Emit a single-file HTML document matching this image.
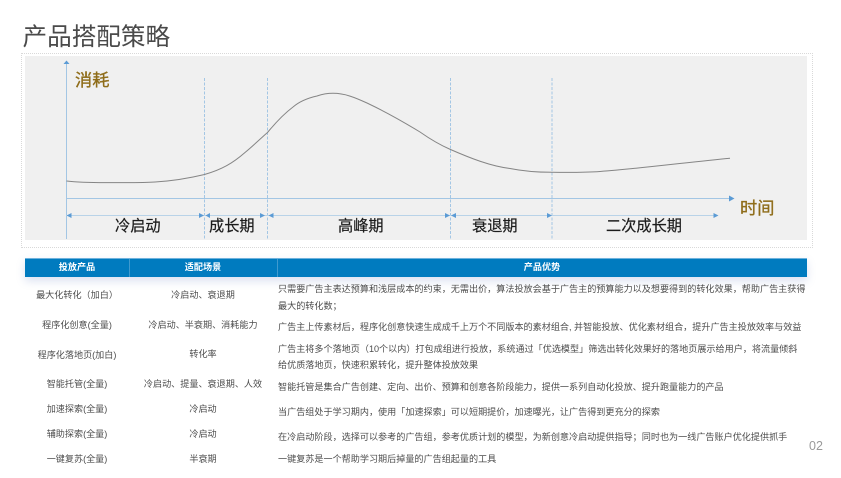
<!DOCTYPE html>
<html lang="zh">
<head>
<meta charset="utf-8">
<style>
html,body{margin:0;padding:0;background:#fff}
body{width:841px;height:478px;position:relative;overflow:hidden;font-family:"Liberation Sans","Noto Sans CJK SC",sans-serif}
#w{position:absolute;left:0;top:0;width:841px;height:478px;filter:blur(.35px)}
.t{position:absolute;white-space:nowrap;line-height:14px;height:14px;font-size:9.1px;color:#4c4c4c}
.c1{left:25px;width:104px;text-align:center}
.c2{left:129px;width:148px;text-align:center}
.c3{left:278px}
.h{position:absolute;top:258px;height:19px;line-height:19px;text-align:center;color:#fff;font-size:9.1px;font-weight:700}
.l{position:absolute;white-space:nowrap;top:218px;height:18px;line-height:18px;font-size:15.2px;color:#1c1c1c;-webkit-text-stroke:.2px #1c1c1c}
.g{position:absolute;white-space:nowrap;height:22px;line-height:22px;font-size:17.2px;color:#8f6d1a;-webkit-text-stroke:.35px #8f6d1a}
</style>
</head>
<body>
<div id="w">
<div style="position:absolute;left:22.5px;top:20px;font-size:24.6px;line-height:36px;color:#4a4a4a;white-space:nowrap">产品搭配策略</div>
<div style="position:absolute;left:21px;top:53px;width:790px;height:193px;border:1px dotted #d9d9d9"></div>
<div style="position:absolute;left:25px;top:56px;width:782px;height:183.5px;background:#f0f0f0"></div>

<svg width="841" height="478" style="position:absolute;left:0;top:0" fill="none">
  <g stroke="#a3c6e4" stroke-width="1">
    <path d="M66.5 63V239"/>
    <path d="M66 198.5H732"/>
    <path d="M204.5 78V239M267.5 78V239M450.5 78V239M552 78V239" stroke-dasharray="3 1.5"/>
  </g>
  <path d="M66 215.5H716" stroke="#b9d3e8" stroke-width="1"/>
  <path d="M66.5 181C78 182.3 90 182.6 105 182.6C120 182.6 140 183 155 182C172 181 190 178 204.5 174.5C222 169.5 233 163 245 152.5C253 146 260 139 267.5 132.5C277 121 285 113 293 107C300 101 308 98 317 96C323 94 328 93.3 333 93.3C345 93.3 355 97.5 367 103C385 111.5 402 121 420 132C430 139 440 145 450.5 149.5C470 158 490 166 510 168.5C525 171.5 540 172.3 552 172.3C570 172.5 585 172.6 600 171.5C640 168.5 690 162 730 158.2" stroke="#858585" stroke-width="1"/>
  <g fill="#5b9bd5">
    <path d="M66.5 60.5L69.5 64H63.5Z"/>
    <path d="M734.5 198.5L729 195.5V201.5Z"/>
    <path d="M66.5 215.5L71.5 213V218Z"/>
    <path d="M204 215.5L199 213V218Z"/>
    <path d="M205.5 215.5L210 213V218Z"/>
    <path d="M265 215.5L260 213V218Z"/>
    <path d="M268.5 215.5L273.5 213V218Z"/>
    <path d="M450 215.5L445 213V218Z"/>
    <path d="M451 215.5L456 213V218Z"/>
    <path d="M552 215.5L547 213V218Z"/>
    <path d="M718.5 215.5L713.5 213V218Z"/>
  </g>
</svg>

<div class="g" style="left:75px;top:69px">消耗</div>
<div class="g" style="left:740px;top:197px">时间</div>
<div class="l" style="left:115px">冷启动</div>
<div class="l" style="left:209px">成长期</div>
<div class="l" style="left:338px">高峰期</div>
<div class="l" style="left:472px">衰退期</div>
<div class="l" style="left:606px">二次成长期</div>

<div style="position:absolute;left:25px;top:258px;width:782px;height:19px;background:#007bbf;border-top:1px solid #6db2dc;box-sizing:border-box;box-shadow:0 4px 9px rgba(90,120,190,.22)"></div>
<div style="position:absolute;left:129px;top:259px;width:1px;height:18px;background:#3f9acf"></div>
<div style="position:absolute;left:277px;top:259px;width:1px;height:18px;background:#3f9acf"></div>
<div class="h" style="left:25px;width:104px">投放产品</div>
<div class="h" style="left:129px;width:148px">适配场景</div>
<div class="h" style="left:277px;width:530px">产品优势</div>

<div class="t c1" style="top:288px">最大化转化（加白）</div>
<div class="t c1" style="top:318px">程序化创意(全量)</div>
<div class="t c1" style="top:348px">程序化落地页(加白)</div>
<div class="t c1" style="top:377px">智能托管(全量)</div>
<div class="t c1" style="top:402px">加速探索(全量)</div>
<div class="t c1" style="top:427px">辅助探索(全量)</div>
<div class="t c1" style="top:452px">一键复苏(全量)</div>

<div class="t c2" style="top:288px">冷启动、衰退期</div>
<div class="t c2" style="top:318px">冷启动、半衰期、消耗能力</div>
<div class="t c2" style="top:347px">转化率</div>
<div class="t c2" style="top:377px">冷启动、提量、衰退期、人效</div>
<div class="t c2" style="top:402px">冷启动</div>
<div class="t c2" style="top:427px">冷启动</div>
<div class="t c2" style="top:452px">半衰期</div>

<div class="t c3" style="top:282px">只需要广告主表达预算和浅层成本的约束，无需出价，算法投放会基于广告主的预算能力以及想要得到的转化效果，帮助广告主获得</div>
<div class="t c3" style="top:299px">最大的转化数；</div>
<div class="t c3" style="top:320px">广告主上传素材后，程序化创意快速生成成千上万个不同版本的素材组合, 并智能投放、优化素材组合，提升广告主投放效率与效益</div>
<div class="t c3" style="top:342px">广告主将多个落地页（10个以内）打包成组进行投放，系统通过「优选模型」筛选出转化效果好的落地页展示给用户，将流量倾斜</div>
<div class="t c3" style="top:358px">给优质落地页，快速积累转化，提升整体投放效果</div>
<div class="t c3" style="top:380px">智能托管是集合广告创建、定向、出价、预算和创意各阶段能力，提供一系列自动化投放、提升跑量能力的产品</div>
<div class="t c3" style="top:405px">当广告组处于学习期内，使用「加速探索」可以短期提价，加速曝光，让广告得到更充分的探索</div>
<div class="t c3" style="top:430px">在冷启动阶段，选择可以参考的广告组，参考优质计划的模型，为新创意冷启动提供指导；同时也为一线广告账户优化提供抓手</div>
<div class="t c3" style="top:452px">一键复苏是一个帮助学习期后掉量的广告组起量的工具</div>

<div class="t" style="left:809px;top:439px;font-size:12.5px;color:#9a9a9a">02</div>
</div>
</body>
</html>
